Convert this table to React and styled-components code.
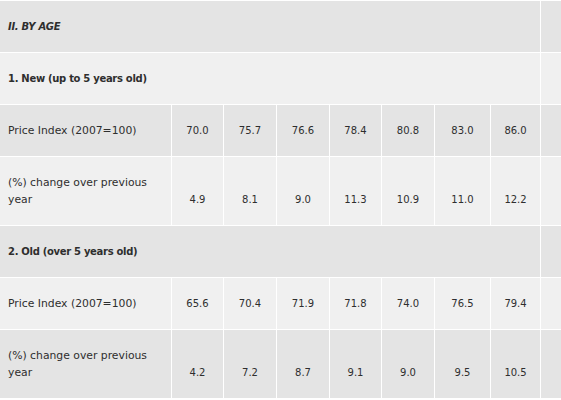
import React from "react";
import styled, { createGlobalStyle } from "styled-components";

const rows = [
  { kind: "title", label: "II. BY AGE" },
  { kind: "group", label: "1. New (up to 5 years old)" },
  { kind: "data", label: "Price Index (2007=100)", values: ["70.0", "75.7", "76.6", "78.4", "80.8", "83.0", "86.0"] },
  { kind: "data", label: "(%) change over previous year", values: ["4.9", "8.1", "9.0", "11.3", "10.9", "11.0", "12.2"] },
  { kind: "group", label: "2. Old (over 5 years old)" },
  { kind: "data", label: "Price Index (2007=100)", values: ["65.6", "70.4", "71.9", "71.8", "74.0", "76.5", "79.4"] },
  { kind: "data", label: "(%) change over previous year", values: ["4.2", "7.2", "8.7", "9.1", "9.0", "9.5", "10.5"] },
];

const colWidths = [172, 52, 53, 53, 52, 53, 56, 50, 60];

function App() {
  return (
    <>
      <GlobalStyle />
      <Wrap>
        <Table>
          <colgroup>
            {colWidths.map((w, i) => (
              <col key={i} style={{ width: w }} />
            ))}
          </colgroup>
          <tbody>
            {rows.map((row, i) => (
              <Row key={i} $shade={i % 2 === 0}>
                {row.kind === "data" ? (
                  <>
                    <Label>{row.label}</Label>
                    {row.values.map((v, j) => (
                      <Num key={j}>{v}</Num>
                    ))}
                    <Cell />
                  </>
                ) : (
                  <>
                    <Heading colSpan={8} $italic={row.kind === "title"}>
                      {row.label}
                    </Heading>
                    <Cell />
                  </>
                )}
              </Row>
            ))}
          </tbody>
        </Table>
      </Wrap>
    </>
  );
}

const GlobalStyle = createGlobalStyle`
  html, body {
    margin: 0;
    padding: 0;
    background: #ffffff;
  }
  body {
    font-family: "DejaVu Sans", "Noto Sans", sans-serif;
  }
`;

const Wrap = styled.div`
  width: 561px;
  height: 400px;
  overflow: hidden;
`;

const Table = styled.table`
  table-layout: fixed;
  width: 601px;
  border-collapse: separate;
  border-spacing: 0;
  border-top: 1px solid #ffffff;
`;

const Row = styled.tr`
  background: ${(p) => (p.$shade ? "#e4e4e4" : "#f0f0f0")};
`;

const Cell = styled.td`
  box-sizing: border-box;
  padding: 17px 8px;
  border-right: 1px solid #ffffff;
  border-bottom: 1px solid #ffffff;
  font-size: 10px;
  line-height: 17px;
  color: #2e2e2e;
`;

const Label = styled(Cell)`
  font-size: 10.8px;
`;

const Heading = styled(Cell)`
  font-weight: 700;
  font-style: ${(p) => (p.$italic ? "italic" : "normal")};
  letter-spacing: -0.3px;
`;

const Num = styled(Cell)`
  text-align: center;
  vertical-align: bottom;
  padding-left: 0;
  padding-right: 0;
`;

export default App;
